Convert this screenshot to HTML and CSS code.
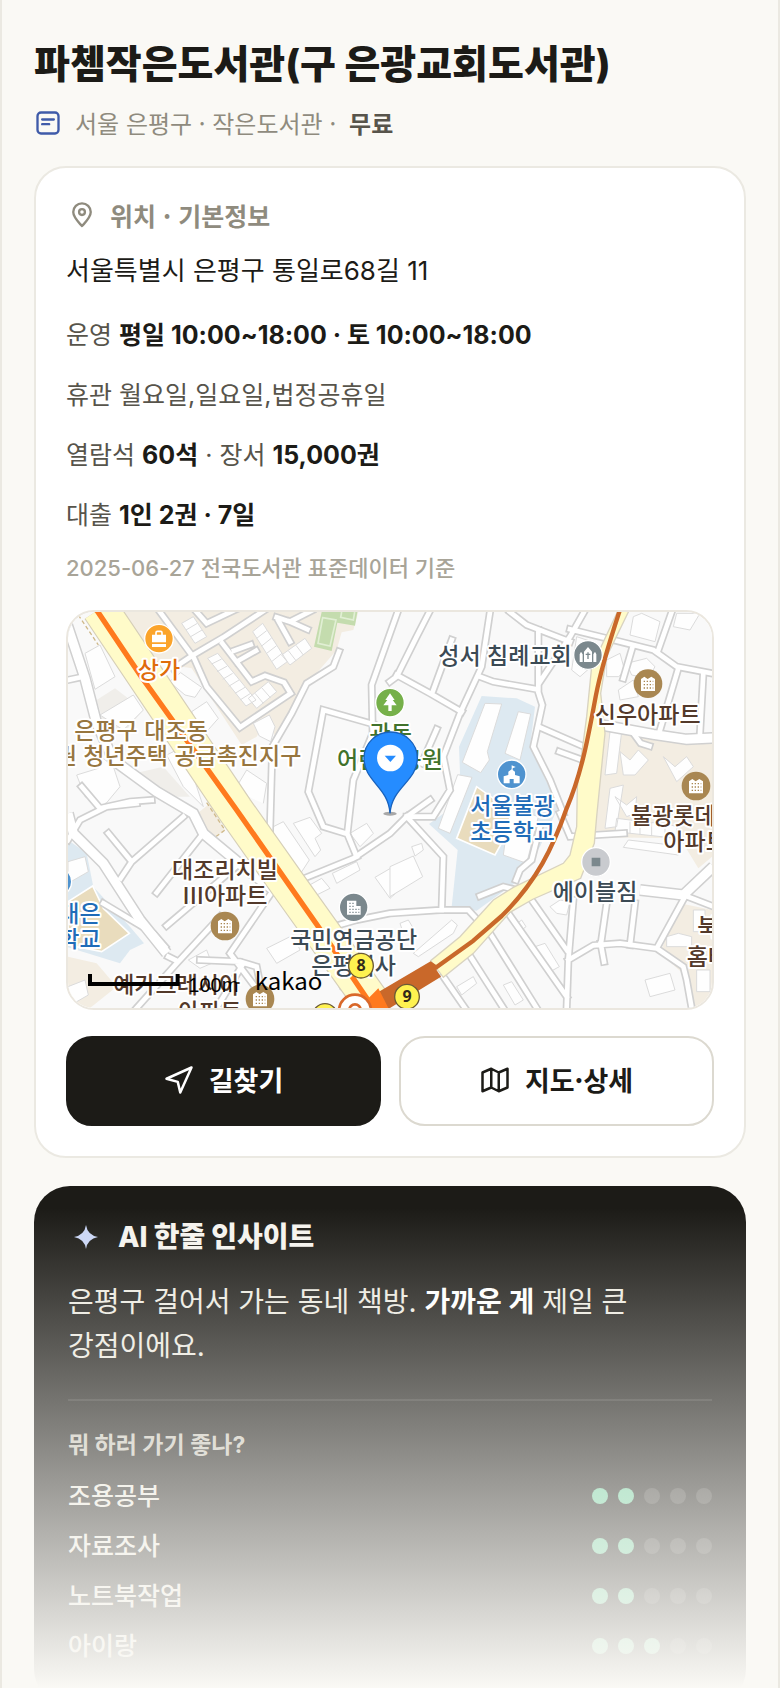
FILE: index.html
```html
<!DOCTYPE html>
<html lang="ko">
<head>
<meta charset="UTF-8">
<meta name="viewport" content="width=device-width, initial-scale=1.0">
<title>파쳄작은도서관</title>
<link rel="stylesheet" href="styles.css">
</head>
<body>

<main class="page">
    <h1 class="title">파쳄작은도서관(구 은광교회도서관)</h1>
    <div class="meta">
        <svg class="meta-icon" viewBox="0 0 24 24"><rect x="3" y="3" width="18" height="18" rx="3"/><path d="M7 9h10M7 13h6"/></svg>
        <span>서울 은평구 · 작은도서관 ·</span>
        <strong>무료</strong>
    </div>

    <section class="card">
        <h2 class="card-title">
            <svg class="pin-icon" viewBox="0 0 24 24"><path d="M12 21.500C8.500 17.500 4.500 14 4.500 9.500a7.500 7.500 0 0 1 15 0c0 4.500-4 8-7.500 12z"/><circle cx="12" cy="9.500" r="2.500"/></svg>
            위치 · 기본정보
        </h2>
        <p class="address">서울특별시 은평구 통일로68길 11</p>
        <div class="facts">
            <p>운영 <b>평일 10:00~18:00 · 토 10:00~18:00</b></p>
            <p>휴관 월요일,일요일,법정공휴일</p>
            <p>열람석 <b>60석</b> · 장서 <b>15,000권</b></p>
            <p>대출 <b>1인 2권 · 7일</b></p>
        </div>
        <p class="source">2025-06-27 전국도서관 표준데이터 기준</p>

        <div class="map">
            <svg viewBox="24 36 1932 1188" preserveAspectRatio="xMidYMid slice">
                <defs>
                    <g id="apt"><circle r="43"/><path class="glyph" d="M-21 -14l10 -7 10 7 11 -7 11 7V22H-21z"/><path class="windows" d="M-13 -7H16M-13 3H16M-13 13H16"/></g>
                    <g id="roads">
                        <path d="M300 36L395 165M340 205L400 165 490 112 615 30M400 170L440 260 540 382 692 280 672 247 615 227 575 245 487 130M530 185L588 152M522 152L572 134M410 36L440 70 525 30M650 52L690 65 755 32M690 65L742 88M655 62L690 125"/>
                        <path d="M837 155L820 200 740 250 695 340 637 440 630 690M938 372L790 330 745 575 790 680 862 702 890 770M1015 30L935 255 938 400 880 540 862 700"/>
                        <path d="M1108 36L1070 110 1010 230 990 245M1010 225L1110 280 1205 335M1175 120L1120 270M1290 36L1265 200 1200 340 1150 470 1170 570 1120 650 1040 650M1260 230L1300 245 1432 268 1447 315 1420 440 1470 540 1510 640M1350 36L1400 75 1530 125M1435 90V268M1572 36L1530 110 1440 245M1530 88L1640 115 1780 150 1850 200 1956 220"/>
                        <path d="M1440 382L1572 440M1498 455L1562 478M1130 388L1085 490M1720 400L1742 430 1768 438M1855 205L1800 390M1930 220L1920 400M1835 36L1795 150M1718 140L1690 235"/>
                        <path d="M24 240L62 232M65 560L120 625 210 605 275 600M24 720L60 660 140 620 230 610M145 700L215 785 370 650M215 785L182 835M430 700L290 878M540 790L320 977M130 910L280 1000 315 1040M640 870L510 1060 600 1180M325 1070L355 1085 480 950M350 1090L230 1224M420 1080L540 1085 590 1100 600 1150M550 1090L470 1224"/>
                        <path d="M740 832L880 775 990 700 1040 650 1110 600M820 980L890 960 990 940 1140 930 1225 930 1290 1000 1430 1224M1040 650L1150 770 1145 930M1345 940L1520 1190M1415 900L1520 1050M1225 1060L1330 1224M1150 1130L1215 1224M1540 900L1525 1080 1520 1224M1525 1080L1600 1036 1680 1030 1790 1045 1870 1100 1880 1140 1895 1224M1622 1030L1632 1085M1640 910L1622 1036M1725 910L1710 1035M1875 890L1790 1045M1870 885L1956 918M1260 888L1330 860 1370 870M1368 840L1380 810 1415 780 1440 680M1500 640L1530 710 1692 700"/>
                    </g>
                    <g id="wide">
                        <path d="M20 70L75 235 110 370 160 480 290 575 400 640 430 700 550 800 640 870M24 640L40 700 130 790 240 960 320 1060M1625 375L1780 403 1880 418 1960 414M1740 870L1870 885 1960 800"/>
                    </g>
                </defs>

                <!-- 구역 -->
                <path fill="#f9f9f9" d="M0 0h2000v1300H0z"/>
                <path fill="#f3ede2" d="M190 36H895L880 90 845 97 830 150 735 260 655 430 620 355 590 410 545 435 395 205 300 190 190 60zM1625 385L1710 385 1956 430V770L1915 805 1860 715 1600 712zM1860 910L1956 930V1224H1900L1880 1130 1800 1060zM24 1070L110 1090 170 1160 90 1224H24zM400 650L450 610 495 690 465 712z"/>
                <path fill="#f0eeea" d="M110 300L165 265 250 330 190 400 140 400zM225 520L310 500 390 590 340 590z"/>
                <path fill="#c4dcae" d="M785 36H892L885 77 832 68 815 153 762 140z"/>
                <path fill="none" stroke="#e1efd4" stroke-width="5" d="M788 53L828 60 810 138 774 130zM845 36L842 52 880 60 884 36"/>
                <path fill="#dde9f1" d="M1265 288L1370 295 1425 320 1410 440 1495 620 1440 740 1370 845 1250 932 1175 920 1193 750 1107 672 1165 630 1200 520 1197 440zM24 720L80 760 100 860 210 980 252 1030 210 1050 180 1090 24 1042z"/>
                <path fill="#e9dcbd" stroke="#fff" stroke-width="5" d="M1250 560L1190 715 1305 765 1372 645zM24 905L98 858 130 925 208 1000 125 1055 24 1035z"/>
                <path fill="none" stroke="#cfb98a" stroke-width="4" stroke-dasharray="12 8" d="M55 45L115 135M440 608L495 690 465 712"/>

                <!-- 건물 -->
                <g class="buildings">
                    <path d="M1275 310L1325 312 1282 455 1288 480 1262 518 1207 487zM1375 335L1412 342 1380 480 1335 460zM1193 524L1236 532 1170 700 1135 685zM1350 620L1435 650 1400 790 1330 765z"/>
                    <path d="M443 175L473 160 588 300 558 318zM565 295L625 245 650 275 590 325zM578 95L608 70 682 185 650 208zM665 165L735 115 755 145 690 195zM365 70L400 50 440 110 405 130z"/>
                    <path d="M455 192L485 177M471 215L502 198M488 238L518 220M506 259L537 240M525 280L555 262M540 300L572 280M590 115L620 92M605 138L635 114M620 160L650 137M636 184L666 160M378 90L412 70M392 110L426 90M585 280L610 310M605 263L632 294M685 152L708 182M708 136L730 165"/>
                    <path d="M328 245L362 218 425 262 405 292 375 285zM395 335L440 305 475 355 440 395 415 390zM580 370L628 345 645 380 632 425 598 408zM75 160L120 135 165 230 105 268zM120 345L220 285 250 330 190 390zM50 525L115 505 130 475 160 500 180 560 130 620 75 590zM320 465L370 440 430 620 370 560zM475 550L530 560 560 510 620 550 610 610"/>
                    <path d="M630 685L670 665 748 780 722 820zM700 670L750 652 785 700 765 715 782 750 765 770zM740 860L785 835 810 865 760 890zM817 820L890 785 900 810 830 850zM945 832L1000 800 1040 850 990 895zM620 1045L700 1005 720 1050 650 1090zM385 1080L440 1050 455 1090 420 1105zM830 1140L880 1130 890 1160 840 1170zM870 700L920 670 940 700 900 740zM24 785L75 770 85 815 24 850zM24 1160L75 1140 85 1185 24 1220z"/>
                    <path d="M990 800L1060 768 1088 830 990 890zM1055 740L1085 730 1090 750 1065 768zM1060 1060L1175 960 1192 975 1180 1000 1075 1070zM1020 970L1045 960 1060 985 1030 1000zM1190 1160L1240 1130 1250 1150 1205 1185zM1330 1155L1355 1145 1390 1200 1365 1215zM1425 1040L1455 1030 1498 1100 1465 1118zM1365 975L1385 960 1398 980 1378 995zM1470 920L1500 900 1530 905 1520 945 1490 940zM1755 1140L1830 1120 1845 1170 1770 1190z"/>
                    <path d="M1650 395H1685L1670 520 1635 525zM1650 565L1690 555 1670 680 1635 685zM1680 455L1710 480 1735 450 1765 480 1725 525 1690 525zM1810 470L1845 500 1880 470 1900 500 1850 545zM1665 590L1700 615 1730 590 1725 640 1700 650zM1670 655L1710 660 1740 665 1775 668 1815 670 1850 680V715L1665 695zM1710 665V700M1740 665V705M1775 668V708M1815 670V712M1705 720L1860 738 1855 765 1690 742z"/>
                    <path d="M1720 50L1745 40 1800 65 1785 125 1710 105zM1640 180L1680 160 1695 215 1675 230 1640 230zM1700 190L1760 175 1785 200 1765 235 1715 225zM1675 270L1720 240 1735 290 1680 300zM1840 80L1850 40H1920L1890 90zM1550 110L1610 130 1605 190 1560 230 1535 210zM1900 930H1935V995H1900zM1820 1010L1855 1000 1895 1010V1040L1820 1040zM1910 1110H1950V1175H1910z"/>
                </g>

                <!-- 골목길 -->
                <use href="#roads" class="casing"/>
                <use href="#wide" class="casing-wide"/>
                <use href="#roads" class="road"/>
                <use href="#wide" class="road-wide"/>

                <!-- 큰길과 지하철 노선 -->
                <path fill="none" stroke="#d6cfb8" stroke-width="112" d="M120 26L526 630 690 862 960 1240"/>
                <path fill="none" stroke="#fffbc9" stroke-width="105" d="M120 26L526 630 690 862 960 1240"/>
                <path fill="#fffbc9" stroke="#d9d3c0" stroke-width="4" d="M1708 30L1640 170 1622 280 1635 400 1610 650 1603 730 1562 835 1420 897 1350 937 1240 1060 1150 1132 1112 1082 1200 1010 1300 900 1360 862 1510 790 1530 765 1550 680 1552 560 1580 350 1595 200 1675 30z"/>
                <path fill="none" stroke="#ff7a1e" stroke-width="16" d="M107 26L245 232 530 630 775 980 940 1224"/>
                <path fill="none" stroke="#c9682a" stroke-width="13" stroke-linejoin="round" d="M1681 26C1650 120 1622 210 1607 290 1585 410 1565 520 1520 625 1480 740 1430 845 1325 948L1240 1022 1125 1105"/>
                <path fill="#c9682a" d="M1112 1084L1133 1098 1128 1108 1143 1130 990 1224H925L935 1188z"/>
                <path fill="#ff7a1e" d="M920 1200L955 1165 985 1224H910z"/>

                <!-- 장소 -->
                <g class="places">
                    <g transform="translate(297 116)" fill="#fba42b"><circle r="43"/><path class="glyph" d="M-21 -12H21V11H-21zM-21 16H21V25H-21z"/><path fill="none" stroke="#fff" stroke-width="5" d="M-9 -10v-8q0 -4 4 -4h10q4 0 4 4v8"/></g>
                    <g transform="translate(990 308)" fill="#76b04a"><circle r="43"/><path class="glyph" d="M0 -28L14 -8H8L20 8H5V25H-5V8H-20L-8 -8H-14z"/></g>
                    <g transform="translate(1355 523)" fill="#4f93cf"><circle r="43"/><path class="glyph" d="M-24 27V6L-10 2V-8L0 -15V-27L12 -22 3 -18V-13L10 -8V2L24 6V27H6V14H-6V27z"/></g>
                    <g transform="translate(1584 165)" fill="#7b888d"><circle r="43"/><path class="glyph" d="M-25 21V-2l4 -8 5 8V21zM-12 21V-10L0 -24 12 -10V21zM16 21V-2l5 -8 4 8V21z"/><path stroke="#7b888d" stroke-width="4" d="M0 -8V12M-7 -2H7"/></g>
                    <g transform="translate(881 922)" fill="#7b888d"><circle r="43"/><path class="glyph" d="M-20 -20H8V-4H21V22H-20z"/><path class="windows windows-grey" d="M-13 -12H4M-13 -3H4M-13 6H17M-13 15H17"/></g>
                    <g transform="translate(1608 786)" fill="#c9cbcf"><circle r="43"/><path fill="#7b888d" d="M-13 -13H13V13H-13z"/></g>
                    <circle cx="-8" cy="845" r="43" fill="#4f93cf"/>
                    <use href="#apt" x="1764" y="251"/>
                    <use href="#apt" x="1908" y="558"/>
                    <use href="#apt" x="495" y="978"/>
                    <use href="#apt" x="600" y="1197"/>
                </g>

                <g class="labels">
                    <text class="shop" x="297" y="234">상가</text>
                    <text class="district" x="243" y="417">은평구 대조동</text>
                    <text class="district end" x="724" y="493">역세권 청년주택 공급촉진지구</text>
                    <text class="park" x="992" y="427">관동</text>
                    <text class="park" x="990" y="503">어린이공원</text>
                    <text class="school" x="1358" y="643">서울불광</text>
                    <text class="school" x="1358" y="720">초등학교</text>
                    <text class="school end" x="122" y="965">대은</text>
                    <text class="school end" x="122" y="1042">초등학교</text>
                    <text x="1335" y="191">성서 침례교회</text>
                    <text x="1605" y="900">에이블짐</text>
                    <text x="881" y="1043">국민연금공단</text>
                    <text x="881" y="1121">은평지사</text>
                    <text class="home" x="1763" y="370">신우아파트</text>
                    <text class="home start" x="1713" y="672">불광롯데캐슬</text>
                    <text class="home start" x="1810" y="751">아파트</text>
                    <text class="home start" x="1912" y="1004">북한산</text>
                    <text class="home start" x="1880" y="1095">홈타운</text>
                    <text class="home" x="495" y="833">대조리치빌</text>
                    <text class="home" x="495" y="912">III아파트</text>
                    <text class="home" x="350" y="1180">예가그레시아</text>
                    <text class="home" x="450" y="1260">아파트</text>
                </g>

                <!-- 출구 번호 -->
                <g class="exits">
                    <circle cx="795" cy="1248" r="37"/>
                    <circle class="station" cx="885" cy="1232" r="48"/>
                    <path class="station" d="M868 1230a17 17 0 1 1 34 0"/>
                    <circle cx="903" cy="1097" r="37"/><text x="903" y="1114">8</text>
                    <circle cx="1041" cy="1190" r="37"/><text x="1041" y="1207">9</text>
                </g>

                <!-- 현재 도서관 핀 -->
                <ellipse cx="990" cy="641" rx="20" ry="6" fill="#555" opacity=".5"/>
                <path fill="#258cff" stroke="#1862bd" stroke-width="4" d="M990 640C985 560 912 545 912 474a80 78 0 0 1 160 0C1072 545 996 560 990 640z"/>
                <circle cx="991" cy="474" r="40" fill="#fff"/>
                <path fill="#258cff" d="M974 467H1008L991 486z"/>

                <path fill="none" stroke="#000" stroke-width="12" d="M90 1122V1152H353V1122"/>
                <text class="scale" x="385" y="1176">100m</text>
                <text class="brand" x="584" y="1170">kakao</text>
            </svg>
        </div>

        <div class="actions">
            <button class="btn btn-dark" type="button">
                <svg viewBox="0 0 24 24"><path d="M22 2L2 11l9 2.500L13 22z"/></svg>
                길찾기
            </button>
            <button class="btn" type="button">
                <svg viewBox="0 0 24 24"><path d="M2 6l7-3 6 3 7-3v15l-7 3-6-3-7 3zM9 3v15M15 6v15"/></svg>
                지도·상세
            </button>
        </div>
    </section>

    <section class="insight">
        <h2 class="insight-title">
            <svg viewBox="0 0 24 24"><path d="M12 0q1.500 10 12 12-10.500 2-12 12-1.500-10-12-12Q10.500 10 12 0z"/></svg>
            AI 한줄 인사이트
        </h2>
        <p class="insight-text">은평구 걸어서 가는 동네 책방. <b>가까운 게</b> 제일 큰 강점이에요.</p>
        <h3 class="purpose-title">뭐 하러 가기 좋나?</h3>
        <ul class="purposes">
            <li>조용공부 <span class="dots"><i class="on"></i><i class="on"></i><i></i><i></i><i></i></span></li>
            <li>자료조사 <span class="dots"><i class="on"></i><i class="on"></i><i></i><i></i><i></i></span></li>
            <li>노트북작업 <span class="dots"><i class="on"></i><i class="on"></i><i></i><i></i><i></i></span></li>
            <li>아이랑 <span class="dots"><i class="on"></i><i class="on"></i><i class="on"></i><i></i><i></i></span></li>
        </ul>
    </section>
    <div class="fade"></div>
</main>

</body>
</html>
```
FILE: styles.css
```css
* {
    box-sizing: border-box;
}

body {
    margin: 0;
    background-color: #faf9f5;
    color: #1c1b17;
    font-family: Inter, "Noto Sans CJK KR", sans-serif;
}

h1, h2, h3, p, ul {
    margin: 0;
    padding: 0;
}

svg {
    fill: none;
    stroke-linecap: round;
    stroke-linejoin: round;
}

.page {
    position: relative;
    height: 100vh;
    overflow: hidden;
    padding: 38px 32px 0;
    border: 0 solid #ebe9e2;
    border-width: 0 2px;
}

.title {
    font-size: 39px;
    line-height: 52px;
    font-weight: 800;
}

.meta {
    display: flex;
    align-items: center;
    gap: 13px;
    margin: 17px 0 27px;
    font-family: "Noto Sans CJK KR", sans-serif;
    font-size: 24px;
    line-height: 32px;
    color: #8f8b7e;
}

.meta strong {
    color: #57544b;
}

.meta-icon {
    width: 28px;
    height: 28px;
    stroke: #3f5ba9;
    stroke-width: 2;
}

/* 위치 카드 */
.card {
    padding: 30px;
    background-color: #fff;
    border: 2px solid #ebe9e2;
    border-radius: 32px;
}

.card-title {
    display: flex;
    align-items: center;
    gap: 14px;
    padding-left: 2px;
    font-family: "Noto Sans CJK KR", sans-serif;
    font-size: 25px;
    line-height: 34px;
    color: #8f8b7e;
}

.pin-icon {
    width: 28px;
    height: 28px;
    stroke: #8f8b7e;
    stroke-width: 2;
}

.address {
    margin-top: 19px;
    font-size: 26px;
    line-height: 40px;
}

.facts {
    display: grid;
    gap: 21px;
    margin-top: 25px;
    font-size: 25px;
    line-height: 39px;
    color: #57544b;
}

.facts b {
    color: #1c1b17;
}

.source {
    margin-top: 16px;
    font-size: 22px;
    font-weight: 500;
    line-height: 34px;
    color: #a8a498;
}

/* 지도 */
.map {
    height: 400px;
    margin-top: 25px;
    border: 2px solid #ebe7df;
    border-radius: 28px;
    overflow: hidden;
}

.map svg {
    display: block;
    width: 100%;
    height: 100%;
    stroke-linecap: butt;
    stroke-linejoin: miter;
}

.buildings {
    fill: #fefefe;
    stroke: #dbdbdb;
    stroke-width: 3;
}

.casing {
    stroke: #d0d0d0;
    stroke-width: 24;
    stroke-linecap: square;
}

.road {
    stroke: #fff;
    stroke-width: 14;
    stroke-linecap: square;
}

.casing-wide {
    stroke: #d0d0d0;
    stroke-width: 36;
}

.road-wide {
    stroke: #fff;
    stroke-width: 27;
}

.places {
    fill: #a98752;
}

.places circle {
    stroke: #fff;
    stroke-width: 4;
}

.glyph {
    fill: #fff;
}

.windows {
    stroke: #a98752;
    stroke-width: 4;
    stroke-dasharray: 4 5;
}

.windows-grey {
    stroke: #7b888d;
}

.labels text {
    font-family: "Noto Sans CJK KR", sans-serif;
    font-size: 69px;
    font-weight: 500;
    text-anchor: middle;
    fill: #3b4a54;
    stroke: #fff;
    stroke-width: 12;
    stroke-linejoin: round;
    paint-order: stroke;
}

.labels .shop {
    fill: #e06c0a;
}

.labels .district {
    fill: #97763f;
}

.labels .park {
    fill: #41722c;
}

.labels .school {
    fill: #1f6cb8;
}

.labels .home {
    fill: #53392a;
}

.labels .start {
    text-anchor: start;
}

.labels .end {
    text-anchor: end;
}

.exits {
    fill: #fff250;
    stroke: #6b5a35;
    stroke-width: 4;
}

.exits .station {
    fill: #fff;
    stroke: #d9682a;
    stroke-width: 8;
}

.exits text {
    font-family: "Noto Sans", sans-serif;
    font-size: 48px;
    font-weight: 700;
    text-anchor: middle;
    fill: #33291a;
    stroke: none;
}

.scale {
    font-family: "Liberation Sans", sans-serif;
    font-size: 60px;
    fill: #000;
}

.brand {
    font-family: "Noto Sans CJK KR", sans-serif;
    font-size: 72px;
    fill: #000;
}

/* 버튼 */
.actions {
    display: grid;
    grid-template-columns: 1fr 1fr;
    gap: 18px;
    margin-top: 26px;
}

.btn {
    display: flex;
    justify-content: center;
    align-items: center;
    gap: 15px;
    height: 90px;
    padding: 0 0 2px;
    font-family: "Noto Sans CJK KR", sans-serif;
    font-size: 27px;
    font-weight: 700;
    line-height: 34px;
    color: #1c1b17;
    background-color: #fff;
    border: 2px solid #dcd9d0;
    border-radius: 26px;
    cursor: pointer;
}

.btn svg {
    width: 30px;
    height: 30px;
    stroke: currentColor;
    stroke-width: 2;
}

.btn-dark {
    color: #fff;
    background-color: #1c1b17;
    border-color: #1c1b17;
}

/* AI 인사이트 */
.insight {
    margin-top: 28px;
    padding: 34px;
    background-color: #1c1b17;
    border-radius: 36px;
    color: #fff;
}

.insight-title {
    display: flex;
    align-items: center;
    gap: 20px;
    padding-left: 6px;
    font-size: 28px;
    font-weight: 800;
    line-height: 34px;
    color: #f5f3ee;
}

.insight-title svg {
    width: 24px;
    height: 24px;
    fill: #c9d5f5;
}

.insight-text {
    margin-top: 26px;
    padding-bottom: 31px;
    border-bottom: 2px solid #33322e;
    font-size: 28px;
    line-height: 44px;
    color: #eceae0;
    word-break: keep-all;
}

.insight-text b {
    color: #fff;
}

.purpose-title {
    margin-top: 28px;
    font-size: 23px;
    line-height: 32px;
    color: #c8c5ba;
}

.purposes {
    margin-top: 10px;
    list-style: none;
    font-size: 25px;
    font-weight: 500;
    line-height: 50px;
    color: #eceae0;
}

.purposes li {
    display: flex;
    justify-content: space-between;
    align-items: center;
}

.dots {
    display: flex;
    gap: 10px;
}

.dots i {
    width: 16px;
    height: 16px;
    border-radius: 50%;
    background-color: #3e3d39;
}

.dots .on {
    background-color: #6fcf9f;
}

/* 아래쪽 흐림 */
.fade {
    position: absolute;
    left: -2px;
    right: -2px;
    bottom: 0;
    height: 480px;
    background: linear-gradient(rgba(250, 249, 245, 0), #faf9f5);
    pointer-events: none;
}
```
